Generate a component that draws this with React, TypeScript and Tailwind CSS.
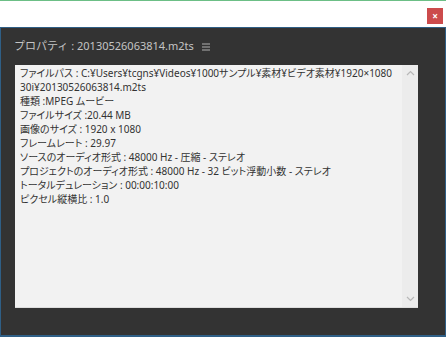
import React from 'react';

const lines: string[] = [
  'ファイルパス : C:¥Users¥tcgns¥Videos¥1000サンプル¥素材¥ビデオ素材¥1920×1080',
  '30i¥20130526063814.m2ts',
  '種類 :MPEG ムービー',
  'ファイルサイズ :20.44 MB',
  '画像のサイズ : 1920 x 1080',
  'フレームレート : 29.97',
  'ソースのオーディオ形式 : 48000 Hz - 圧縮 - ステレオ',
  'プロジェクトのオーディオ形式 : 48000 Hz - 32 ビット浮動小数 - ステレオ',
  'トータルデュレーション : 00:00:10:00',
  'ピクセル縦横比 : 1.0',
];

const App: React.FC = () => {
  return (
    <div className="w-[446px] h-[337px] flex flex-col bg-white overflow-hidden font-['Noto_Sans','Noto_Sans_CJK_JP',sans-serif]">
      <div className="h-px bg-[#6cbf86]" />
      <div className="h-[26px] flex justify-end items-start pt-[7px] pr-[3px]">
        <div className="w-[16px] h-[16px] bg-[#cc4b4c] flex items-center justify-center text-white text-[10px] leading-none font-bold">
          ×
        </div>
      </div>
      <div className="flex-1 flex flex-col bg-[#333333] border border-[#2f5f86] border-b-2">
        <div className="h-[37px] flex items-center pl-[13px] text-[11px] text-[#c4c4c4]">
          <span>プロパティ : 20130526063814.m2ts</span>
          <svg className="ml-[8px]" width="8" height="8" viewBox="0 0 8 8" fill="#b0b0b0">
            <rect x="0" y="0.5" width="8" height="1" />
            <rect x="0" y="3.5" width="8" height="1" />
            <rect x="0" y="6.5" width="8" height="1" />
          </svg>
        </div>
        <div className="ml-[14px] w-[403px] h-[243px] bg-[#f2f2f2] flex border-b border-[#dedede]">
          <div className="flex-1 min-w-0 overflow-hidden pl-[5px] pt-[1px] text-[10px] leading-[14px] text-[#333333] [font-feature-settings:'palt']">
            {lines.map((l, i) => (
              <div key={i} className="whitespace-nowrap">{l}</div>
            ))}
          </div>
          <div className="w-[16px] shrink-0 bg-[#ececec] flex flex-col items-center justify-between py-[5px]">
            <svg width="9" height="6" viewBox="0 0 9 6" fill="none" stroke="#b8b8b8" strokeWidth="1.2">
              <path d="M1 5 L4.5 1.5 L8 5" />
            </svg>
            <svg width="9" height="6" viewBox="0 0 9 6" fill="none" stroke="#b8b8b8" strokeWidth="1.2">
              <path d="M1 1 L4.5 4.5 L8 1" />
            </svg>
          </div>
        </div>
      </div>
    </div>
  );
};

export default App;
